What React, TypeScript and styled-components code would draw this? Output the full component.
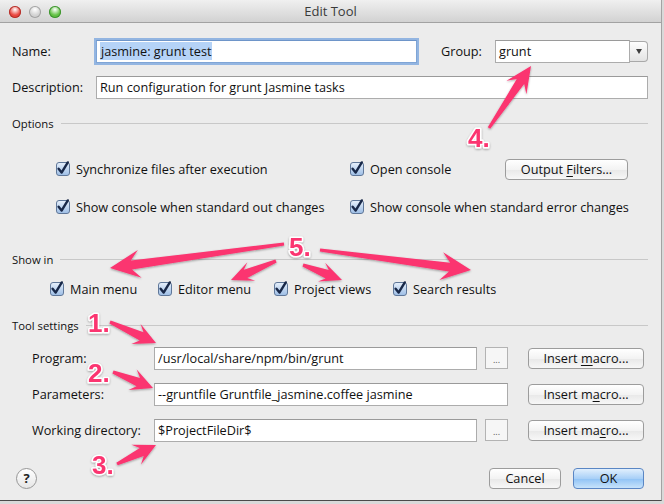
import React from 'react';
import styled, { createGlobalStyle } from 'styled-components';

const GlobalStyle = createGlobalStyle`
  html, body {
    margin: 0;
    padding: 0;
    background: #cfcfcf;
  }
  body {
    font-family: 'Open Sans', 'Noto Sans', sans-serif;
    font-size: 12.7px;
    color: #111;
  }
`;

const Page = styled.div`
  width: 664px;
  height: 504px;
  overflow: hidden;
  background: #d9d9d9;
`;

const Window = styled.div`
  position: relative;
  width: 661px;
  height: 500px;
  background: #ececec;
  border-right: 1px solid #a3a3a3;
  border-bottom: 1px solid #4a4a4a;
  display: flex;
  flex-direction: column;
  overflow: hidden;
`;

const TitleBar = styled.div`
  height: 22px;
  flex: none;
  display: flex;
  align-items: center;
  justify-content: center;
  position: relative;
  background: linear-gradient(#f0f0f0, #d2d2d2);
  border-bottom: 1px solid #a2a2a2;
  font-size: 13px;
  color: #3a3a3a;
`;

const Lights = styled.div`
  position: absolute;
  left: 9px;
  top: 6px;
  display: flex;
  gap: 8px;
`;

const Light = styled.span<{ $c: string; $rim: string }>`
  width: 12px;
  height: 12px;
  border-radius: 50%;
  background: radial-gradient(circle at 50% 30%, #ffffff 0, ${(p) => p.$c} 55%);
  box-shadow: inset 0 0 0 1px ${(p) => p.$rim};
`;

const Content = styled.div`
  padding: 16px 13px 0 12px;
  display: flex;
  flex-direction: column;
`;

const HeadGrid = styled.div`
  display: grid;
  grid-template-columns: 84px 321px 24px 54px 1fr;
  grid-auto-rows: 24px;
  row-gap: 12px;
  align-items: center;
`;

const Label = styled.span`
  white-space: nowrap;
`;

const TextBox = styled.div<{ $span?: string; $focus?: boolean }>`
  grid-column: ${(p) => p.$span || 'auto'};
  height: 23px;
  box-sizing: border-box;
  background: #fff;
  border: 1px solid ${(p) => (p.$focus ? '#7fa5d6' : '#acacac')};
  border-top-color: ${(p) => (p.$focus ? '#6e95c9' : '#9a9a9a')};
  box-shadow: ${(p) => (p.$focus ? '0 0 0 2px rgba(118, 163, 222, 0.75)' : 'none')};
  display: flex;
  align-items: center;
  padding-left: 3px;
  white-space: nowrap;
  overflow: hidden;
`;

const Selected = styled.span`
  background: #b5d3f7;
  padding: 0 1px;
`;

const Combo = styled.div`
  display: flex;
  align-items: center;
  height: 24px;
`;

const ComboField = styled(TextBox)`
  flex: 1;
`;

const ComboButton = styled.div`
  width: 18px;
  height: 21px;
  box-sizing: border-box;
  border: 1px solid #a9a9a9;
  border-left: none;
  border-radius: 0 4px 4px 0;
  background: linear-gradient(#fdfdfd, #e3e3e3);
  display: flex;
  align-items: center;
  justify-content: center;
  &::after {
    content: '';
    border-left: 3.5px solid transparent;
    border-right: 3.5px solid transparent;
    border-top: 5px solid #3e3e3e;
  }
`;

const Separator = styled.div<{ $top: number }>`
  margin-top: ${(p) => p.$top}px;
  height: 16px;
  display: flex;
  align-items: center;
  gap: 7px;
  font-size: 11.3px;
  &::after {
    content: '';
    flex: 1;
    height: 1px;
    background: #c8c8c8;
  }
`;

const OptionsGrid = styled.div`
  margin: 27px 0 0 44px;
  display: grid;
  grid-template-columns: 294px 155px auto;
  grid-auto-rows: 22px;
  row-gap: 16px;
  align-items: center;
`;

const ShowInRow = styled.div`
  margin: 12px 0 0 38px;
  height: 20px;
  display: grid;
  grid-template-columns: 108px 116px 119px auto;
  align-items: center;
`;

const CheckItem = styled.label`
  display: flex;
  align-items: center;
  gap: 6px;
  white-space: nowrap;
`;

const Box = styled.span`
  width: 14px;
  height: 14px;
  box-sizing: border-box;
  border: 1px solid #5f7799;
  border-radius: 3px;
  background: linear-gradient(#e4eefa, #9fbfe6);
  display: flex;
  align-items: center;
  justify-content: center;
  overflow: visible;
`;

const Button = styled.div<{ $w: number; $primary?: boolean }>`
  width: ${(p) => p.$w}px;
  height: 21px;
  box-sizing: border-box;
  border: 1px solid ${(p) => (p.$primary ? '#5a86c4' : '#9c9c9c')};
  border-radius: 4px;
  background: ${(p) =>
    p.$primary
      ? 'linear-gradient(#e1effd, #a9d0f7 50%, #8fc2f5 51%, #c7e3fb)'
      : 'linear-gradient(#ffffff, #f3f3f3 50%, #e8e8e8 51%, #f7f7f7)'};
  display: flex;
  align-items: center;
  justify-content: center;
  white-space: pre;
  u {
    text-decoration-thickness: 1px;
    text-underline-offset: 2px;
  }
`;

const ToolGrid = styled.div`
  margin: 13px 4px 0 20px;
  display: grid;
  grid-template-columns: 114px 1fr 23px 128px;
  column-gap: 8px;
  grid-auto-rows: 24px;
  row-gap: 12px;
  align-items: center;
`;

const MacroButton = styled(Button)`
  grid-column: 4;
  justify-self: end;
`;

const Browse = styled.div`
  width: 23px;
  height: 22px;
  box-sizing: border-box;
  border: 1px solid #b3b3b3;
  background: #f6f6f6;
  display: flex;
  align-items: center;
  justify-content: center;
  font-size: 9px;
  color: #555;
  padding-top: 2px;
`;

const Footer = styled.div`
  margin: 25px 4px 0 4px;
  height: 22px;
  display: flex;
  align-items: center;
  justify-content: space-between;
`;

const Help = styled.div`
  width: 21px;
  height: 21px;
  box-sizing: border-box;
  border-radius: 50%;
  border: 1px solid #979797;
  background: linear-gradient(#ffffff, #e6e6e6);
  display: flex;
  align-items: center;
  justify-content: center;
  font-weight: 700;
  font-size: 13px;
  color: #222;
`;

const Actions = styled.div`
  display: flex;
  gap: 12px;
`;

const Overlay = styled.svg`
  position: absolute;
  left: 0;
  top: 0;
  pointer-events: none;
`;

const Check = () => (
  <Box>
    <svg width="14" height="14" viewBox="0 0 14 14" style={{ overflow: 'visible' }}>
      <path d="M2.6 6.8 L5.6 10.6 L11.8 0.4" fill="none" stroke="#182848" strokeWidth="2.4" strokeLinecap="round" strokeLinejoin="round" />
    </svg>
  </Box>
);

const CheckOption: React.FC<{ label: string }> = ({ label }) => (
  <CheckItem>
    <Check />
    {label}
  </CheckItem>
);

const Macro: React.FC<{ letter: number }> = ({ letter }) => {
  const text = 'Insert macro...';
  return (
    <MacroButton $w={116}>
      <span>
        {text.slice(0, letter)}
        <u>{text[letter]}</u>
        {text.slice(letter + 1)}
      </span>
    </MacroButton>
  );
};

// tapered skitch-style arrow: thin at the tail, wide head at the tip
function arrow(x1: number, y1: number, x2: number, y2: number, head = 22, hw = 11) {
  const dx = x2 - x1;
  const dy = y2 - y1;
  const len = Math.hypot(dx, dy);
  const ux = dx / len;
  const uy = dy / len;
  const nx = -uy;
  const ny = ux;
  const bx = x2 - ux * head * 0.72;
  const by = y2 - uy * head * 0.72;
  const hx = x2 - ux * head;
  const hy = y2 - uy * head;
  const pts = [
    [x1 + nx * 1.5, y1 + ny * 1.5],
    [bx + nx * 4.5, by + ny * 4.5],
    [hx + nx * hw, hy + ny * hw],
    [x2, y2],
    [hx - nx * hw, hy - ny * hw],
    [bx - nx * 4.5, by - ny * 4.5],
    [x1 - nx * 1.5, y1 - ny * 1.5],
  ];
  return pts.map((p) => p.map((v) => v.toFixed(1)).join(',')).join(' ');
}

const arrows: [number, number, number, number, number?, number?][] = [
  [110, 322, 156, 343],
  [113, 372, 153, 388],
  [117, 464, 156, 445],
  [489, 128, 531, 66, 26, 12],
  [284, 244, 110, 268, 30, 14],
  [276, 261, 231, 280, 22, 10],
  [303, 265, 342, 280, 22, 10],
  [320, 250, 471, 270, 30, 14],
];

const numbers: [string, number, number][] = [
  ['1.', 88, 332],
  ['2.', 88, 382],
  ['3.', 92, 474],
  ['4.', 468, 147],
  ['5.', 289, 256],
];

const Annotations = () => (
  <Overlay width="664" height="504" viewBox="0 0 664 504">
    <defs>
      <filter id="sh" x="-20%" y="-20%" width="140%" height="140%">
        <feDropShadow dx="0" dy="1" stdDeviation="1" floodColor="#000" floodOpacity="0.35" />
      </filter>
    </defs>
    <g filter="url(#sh)" fill="#fb3470">
      {arrows.map(([a, b, c, d, h, w], i) => (
        <polygon key={i} points={arrow(a, b, c, d, h, w)} />
      ))}
      {numbers.map(([t, x, y]) => (
        <text
          key={t}
          x={x}
          y={y}
          fontFamily="'Liberation Sans', Arial, sans-serif"
          fontWeight="700"
          fontSize="26"
          stroke="#fff"
          strokeWidth="3"
          paintOrder="stroke"
          strokeLinejoin="round"
        >
          {t}
        </text>
      ))}
    </g>
  </Overlay>
);

export default function App() {
  return (
    <Page>
      <GlobalStyle />
      <Window>
        <TitleBar>
          <Lights>
            <Light $c="#e9463f" $rim="#b1322c" />
            <Light $c="#d2d2d2" $rim="#a3a3a3" />
            <Light $c="#62c143" $rim="#3e9231" />
          </Lights>
          Edit Tool
        </TitleBar>
        <Content>
          <HeadGrid>
            <Label>Name:</Label>
            <TextBox $focus>
              <Selected>jasmine: grunt test</Selected>
            </TextBox>
            <span />
            <Label>Group:</Label>
            <Combo>
              <ComboField>grunt</ComboField>
              <ComboButton />
            </Combo>
            <Label>Description:</Label>
            <TextBox $span="2 / -1">Run configuration for grunt Jasmine tasks</TextBox>
          </HeadGrid>

          <Separator $top={16}>Options</Separator>
          <OptionsGrid>
            <CheckOption label="Synchronize files after execution" />
            <CheckOption label="Open console" />
            <Button $w={123}>
              <span>
                Output <u>F</u>ilters...
              </span>
            </Button>
            <CheckOption label="Show console when standard out changes" />
            <CheckOption label="Show console when standard error changes" />
          </OptionsGrid>

          <Separator $top={33}>Show in</Separator>
          <ShowInRow>
            <CheckOption label="Main menu" />
            <CheckOption label="Editor menu" />
            <CheckOption label="Project views" />
            <CheckOption label="Search results" />
          </ShowInRow>

          <Separator $top={18}>Tool settings</Separator>
          <ToolGrid>
            <Label>Program:</Label>
            <TextBox>/usr/local/share/npm/bin/grunt</TextBox>
            <Browse>...</Browse>
            <Macro letter={7} />
            <Label>Parameters:</Label>
            <TextBox $span="2 / 4">--gruntfile Gruntfile_jasmine.coffee jasmine</TextBox>
            <Macro letter={8} />
            <Label>Working directory:</Label>
            <TextBox>$ProjectFileDir$</TextBox>
            <Browse>...</Browse>
            <Macro letter={9} />
          </ToolGrid>

          <Footer>
            <Help>?</Help>
            <Actions>
              <Button $w={72}>Cancel</Button>
              <Button $w={71} $primary>
                OK
              </Button>
            </Actions>
          </Footer>
        </Content>
        <Annotations />
      </Window>
    </Page>
  );
}
